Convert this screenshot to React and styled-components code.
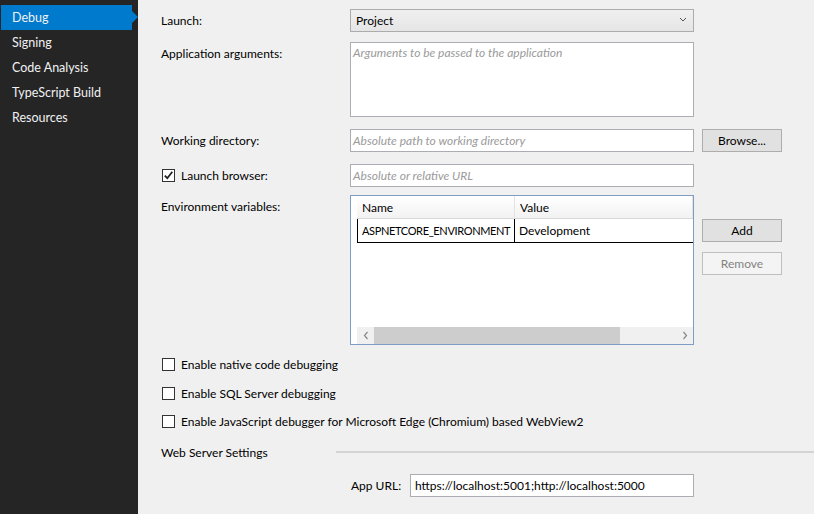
import React from "react";
import styled, { createGlobalStyle } from "styled-components";

const GlobalStyle = createGlobalStyle`
  html, body { margin: 0; padding: 0; }
  body {
    font-family: Lato, "Noto Sans", "Liberation Sans", sans-serif;
    font-size: 12px;
    color: #000;
    background: #F0F0F0;
  }
`;

const sideItems = ["Debug", "Signing", "Code Analysis", "TypeScript Build", "Resources"];

export default function App() {
  return (
    <>
      <GlobalStyle />
      <Page>
        <Sidebar>
          {sideItems.map((item, i) => (
            <SideItem key={item} active={i === 0}>{item}</SideItem>
          ))}
        </Sidebar>

        <Main>
          <Row>
            <Label>Launch:</Label>
            <Select>
              <span>Project</span>
              <svg width="8" height="5" viewBox="0 0 8 5">
                <path d="M1 1 L4 4 L7 1" fill="none" stroke="#555" strokeWidth="1" />
              </svg>
            </Select>
          </Row>

          <Row gap={10}>
            <Label>Application arguments:</Label>
            <TextArea>
              <Placeholder>Arguments to be passed to the application</Placeholder>
            </TextArea>
          </Row>

          <Row gap={12}>
            <Label>Working directory:</Label>
            <Input><Placeholder>Absolute path to working directory</Placeholder></Input>
            <Button>Browse...</Button>
          </Row>

          <Row gap={12}>
            <Label>
              <Check checked />
              Launch browser:
            </Label>
            <Input><Placeholder>Absolute or relative URL</Placeholder></Input>
          </Row>

          <Row gap={8}>
            <Label>Environment variables:</Label>
            <Grid>
              <GridBody>
                <HeaderRow>
                  <HeaderCell width={158}>Name</HeaderCell>
                  <HeaderCell>Value</HeaderCell>
                </HeaderRow>
                <DataRow>
                  <DataCell width={158} tight>ASPNETCORE_ENVIRONMENT</DataCell>
                  <DataCell>Development</DataCell>
                </DataRow>
                <Empty />
                <ScrollBar>
                  <ScrollArrow>
                    <svg width="6" height="9" viewBox="0 0 6 9">
                      <path d="M4.5 1 L1.5 4.5 L4.5 8" fill="none" stroke="#888" strokeWidth="1.2" />
                    </svg>
                  </ScrollArrow>
                  <Thumb />
                  <Track />
                  <ScrollArrow>
                    <svg width="6" height="9" viewBox="0 0 6 9">
                      <path d="M1.5 1 L4.5 4.5 L1.5 8" fill="none" stroke="#888" strokeWidth="1.2" />
                    </svg>
                  </ScrollArrow>
                </ScrollBar>
              </GridBody>
            </Grid>
            <SideButtons>
              <Button>Add</Button>
              <Button disabled>Remove</Button>
            </SideButtons>
          </Row>

          <CheckRow top={9}>
            <Check />
            Enable native code debugging
          </CheckRow>
          <CheckRow top={9}>
            <Check />
            Enable SQL Server debugging
          </CheckRow>
          <CheckRow top={8}>
            <Check />
            Enable JavaScript debugger for Microsoft Edge (Chromium) based WebView2
          </CheckRow>

          <SectionHeader>
            <SectionTitle>Web Server Settings</SectionTitle>
            <SectionLine />
          </SectionHeader>

          <UrlRow>
            <UrlLabel>App URL:</UrlLabel>
            <UrlInput>https://localhost:5001;http://localhost:5000</UrlInput>
          </UrlRow>
        </Main>
      </Page>
    </>
  );
}

function Check({ checked }) {
  return (
    <CheckBox>
      {checked && (
        <svg width="11" height="11" viewBox="0 0 11 11">
          <path d="M1.8 5.6 L4.3 8.2 L9.3 1.8" fill="none" stroke="#222" strokeWidth="1.8" />
        </svg>
      )}
    </CheckBox>
  );
}

const Page = styled.div`
  display: flex;
  width: 814px;
  height: 514px;
  overflow: hidden;
`;

const Sidebar = styled.div`
  width: 138px;
  flex-shrink: 0;
  background: #252526;
  padding-top: 5px;
  box-sizing: border-box;
`;

const SideItem = styled.div`
  position: relative;
  height: 25px;
  line-height: 26px;
  margin-left: 1px;
  width: 131px;
  padding-left: 11px;
  box-sizing: border-box;
  color: #F1F1F1;
  font-size: 12.5px;
  background: ${(p) => (p.active ? "#007ACC" : "transparent")};

  &::after {
    content: "";
    display: ${(p) => (p.active ? "block" : "none")};
    position: absolute;
    right: -6px;
    top: 6px;
    border-left: 6px solid #007ACC;
    border-top: 6px solid transparent;
    border-bottom: 6px solid transparent;
  }
`;

const Main = styled.div`
  flex: 1;
  background: #F0F0F0;
  padding: 9px 0 0 23px;
  display: flex;
  flex-direction: column;
`;

const Row = styled.div`
  display: flex;
  align-items: flex-start;
  margin-top: ${(p) => p.gap || 0}px;
`;

const Label = styled.div`
  width: 189px;
  flex-shrink: 0;
  height: 23px;
  line-height: 23px;
  display: flex;
  align-items: center;
  white-space: nowrap;
`;

const fieldBase = `
  width: 344px;
  box-sizing: border-box;
  border: 1px solid #ABADB3;
  background: #FFFFFF;
`;

const Select = styled.div`
  width: 344px;
  height: 23px;
  box-sizing: border-box;
  border: 1px solid #ACACAC;
  background: linear-gradient(#F0F0F0, #E5E5E5);
  display: flex;
  align-items: center;
  justify-content: space-between;
  padding: 0 6px 0 5px;
  svg { margin-top: -2px; }
`;

const TextArea = styled.div`
  ${fieldBase}
  height: 75px;
  padding: 2px 2px;
`;

const Input = styled.div`
  ${fieldBase}
  height: 23px;
  padding: 0 2px;
  line-height: 21px;
`;

const Placeholder = styled.span`
  color: #9A9A9A;
  font-style: italic;
`;

const Button = styled.div`
  width: 80px;
  height: 23px;
  margin-left: 8px;
  box-sizing: border-box;
  border: 1px solid ${(p) => (p.disabled ? "#BFBFBF" : "#ADADAD")};
  background: ${(p) => (p.disabled ? "#F4F4F4" : "#E1E1E1")};
  color: ${(p) => (p.disabled ? "#838383" : "#000")};
  display: flex;
  align-items: center;
  justify-content: center;
`;

const SideButtons = styled.div`
  display: flex;
  flex-direction: column;
  gap: 10px;
  padding-top: 24px;
`;

const CheckBox = styled.span`
  width: 13px;
  height: 13px;
  box-sizing: border-box;
  border: 1px solid #333;
  background: #FFF;
  display: inline-flex;
  align-items: center;
  justify-content: center;
  margin: 0 6px 0 1px;
  flex-shrink: 0;
`;

const Grid = styled.div`
  width: 344px;
  height: 150px;
  box-sizing: border-box;
  border: 1px solid #7F9DC4;
  background: #FFF;
  padding-left: 6px;
  display: flex;
`;

const GridBody = styled.div`
  flex: 1;
  display: flex;
  flex-direction: column;
`;

const HeaderRow = styled.div`
  display: flex;
  height: 23px;
  background: linear-gradient(#FFFFFF, #F2F2F2);
  border-bottom: 1px solid #D9D9D9;
  box-sizing: border-box;
`;

const HeaderCell = styled.div`
  ${(p) => (p.width ? `width: ${p.width}px;` : "flex: 1;")}
  box-sizing: border-box;
  padding-left: 5px;
  line-height: 24px;
  border-right: 1px solid #E3E3E3;
`;

const DataRow = styled.div`
  display: flex;
  height: 24px;
  border-left: 1px solid #000;
  border-bottom: 1px solid #000;
  box-sizing: border-box;
`;

const DataCell = styled.div`
  ${(p) => (p.width ? `width: ${p.width - 1}px; border-right: 1px solid #000;` : "flex: 1;")}
  box-sizing: border-box;
  padding-left: 4px;
  line-height: 23px;
  white-space: nowrap;
  overflow: hidden;
  font-size: ${(p) => (p.tight ? "11px" : "12px")};
  letter-spacing: ${(p) => (p.tight ? "-0.35px" : "normal")};
`;

const Empty = styled.div`
  flex: 1;
`;

const ScrollBar = styled.div`
  height: 17px;
  display: flex;
  background: #F0F0F0;
`;

const ScrollArrow = styled.div`
  width: 17px;
  display: flex;
  align-items: center;
  justify-content: center;
`;

const Thumb = styled.div`
  width: 246px;
  background: #CDCDCD;
`;

const Track = styled.div`
  flex: 1;
`;

const CheckRow = styled.div`
  display: flex;
  align-items: center;
  height: 20px;
  margin-top: ${(p) => p.top}px;
`;

const SectionHeader = styled.div`
  display: flex;
  align-items: center;
  height: 20px;
  margin-top: 11px;
`;

const SectionTitle = styled.div`
  width: 175px;
  flex-shrink: 0;
`;

const SectionLine = styled.div`
  flex: 1;
  height: 2px;
  background: #D4D4D4;
`;

const UrlRow = styled.div`
  display: flex;
  align-items: center;
  margin-top: 12px;
  padding-left: 190px;
`;

const UrlLabel = styled.div`
  width: 59px;
`;

const UrlInput = styled.div`
  width: 284px;
  height: 23px;
  box-sizing: border-box;
  border: 1px solid #ABADB3;
  background: #FFF;
  padding: 0 4px;
  line-height: 21px;
`;
